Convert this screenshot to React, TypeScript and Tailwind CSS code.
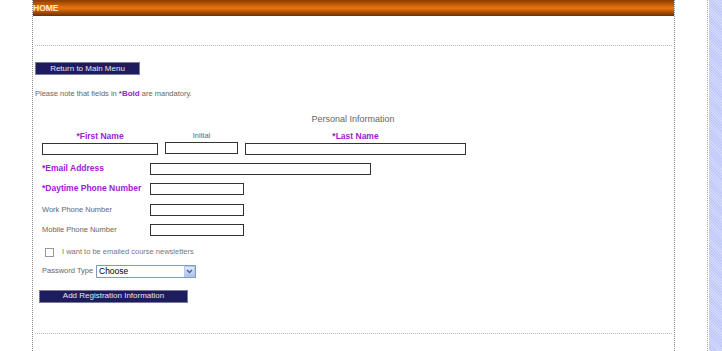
import React from "react";

const label = "text-[7.5px] text-[#666] leading-none";
const req = "text-[8.5px] font-bold text-[#a020d0] leading-none";
const box = "h-[12px] border border-[#333] bg-white";

function NavyButton({ children, className }: { children: React.ReactNode; className?: string }) {
  return (
    <div
      className={`flex items-center justify-center h-[13px] bg-[#1d1d5e] border border-[#7a7a9a] text-[8px] text-[#e4e4f4] leading-none ${className ?? ""}`}
    >
      {children}
    </div>
  );
}

function FieldRow({ text, required, width, className }: { text: string; required?: boolean; width: number; className?: string }) {
  return (
    <div className={`flex items-center h-[12px] ${className ?? ""}`}>
      <div className={`w-[108px] ${required ? req : label}`}>{text}</div>
      <div className={box} style={{ width }} />
    </div>
  );
}

export default function App() {
  return (
    <div
      className="flex w-[722px] h-[351px] bg-white overflow-hidden"
      style={{ fontFamily: '"Liberation Sans", Arial, sans-serif' }}
    >
      <div className="w-[32px] shrink-0" />

      {/* main column */}
      <div className="w-[643px] shrink-0 border-x border-dotted border-[#888] flex flex-col">
        <div className="h-[16px] bg-gradient-to-b from-[#8a3c02] via-[#ec760e] to-[#6e2e00] flex items-center">
          <span className="text-[8.5px] font-bold text-[#ffe8d0] leading-none">HOME</span>
        </div>
        <div className="h-[30px] mx-[2px] border-b border-dotted border-[#bbb]" />

        <div className="pl-[2px] pt-[16px]">
          <NavyButton className="w-[105px]">Return to Main Menu</NavyButton>
        </div>

        <div className="pl-[2px] pt-[15px] text-[7.5px] text-[#666] leading-none">
          Please note that fields in <span className="font-bold text-[#a020d0] text-[8px]">*Bold</span> are mandatory.
        </div>

        <div className="pt-[17px] text-[9px] text-[#666] leading-none text-center w-[640px]">Personal Information</div>

        {/* name row */}
        <div className="pl-[9px] pt-[8px] flex gap-[7px]">
          <div className="flex flex-col items-center gap-[2px] w-[116px]">
            <div className={req}>*First Name</div>
            <div className={`${box} w-[116px]`} />
          </div>
          <div className="flex flex-col items-center gap-[2px] w-[73px]">
            <div className="text-[7.5px] text-[#666] leading-none">Initial</div>
            <div className={`${box} w-[73px]`} />
          </div>
          <div className="flex flex-col items-center gap-[2px] w-[221px]">
            <div className={req}>*Last Name</div>
            <div className={`${box} w-[221px]`} />
          </div>
        </div>

        <div className="pl-[9px] pt-[8px] flex flex-col gap-[8px]">
          <FieldRow text="*Email Address" required width={221} />
          <FieldRow text="*Daytime Phone Number" required width={94} />
          <FieldRow text="Work Phone Number" width={94} className="mt-[1px]" />
          <FieldRow text="Mobile Phone Number" width={94} />
        </div>

        <div className="pl-[12px] pt-[12px] flex items-center gap-[8px]">
          <div className="w-[9px] h-[9px] border border-[#999] bg-white" />
          <span className="text-[7.5px] text-[#777] leading-none">I want to be emailed course newsletters</span>
        </div>

        <div className="pl-[9px] pt-[8px] flex items-center">
          <span className="text-[7.5px] text-[#666] leading-none w-[54px]">Password Type</span>
          <div className="flex items-center w-[100px] h-[13px] border border-[#7f9db9] bg-white">
            <span className="flex-1 pl-[2px] text-[8.5px] text-black leading-none">Choose</span>
            <div className="w-[11px] h-[11px] bg-gradient-to-b from-[#dfe9fb] to-[#aac4f0] border border-[#b4c8ec] flex items-center justify-center">
              <svg width="7" height="5" viewBox="0 0 7 5">
                <path d="M1 1 L3.5 3.5 L6 1" stroke="#4d6185" strokeWidth="1.4" fill="none" />
              </svg>
            </div>
          </div>
        </div>

        <div className="pl-[6px] pt-[12px]">
          <NavyButton className="w-[149px]">Add Registration Information</NavyButton>
        </div>

        <div className="h-[31px] mx-[2px] border-b border-dotted border-[#bbb]" />
      </div>

      <div className="w-[32px] shrink-0" />
      <div className="w-[2px] shrink-0 border-l border-dotted border-[#aaa]" />
      <div
        className="flex-1 bg-[#c6cefa]"
        style={{ backgroundImage: "repeating-linear-gradient(45deg, #c0c9f8 0 1px, #d2d8fc 1px 2px)" }}
      />
    </div>
  );
}
